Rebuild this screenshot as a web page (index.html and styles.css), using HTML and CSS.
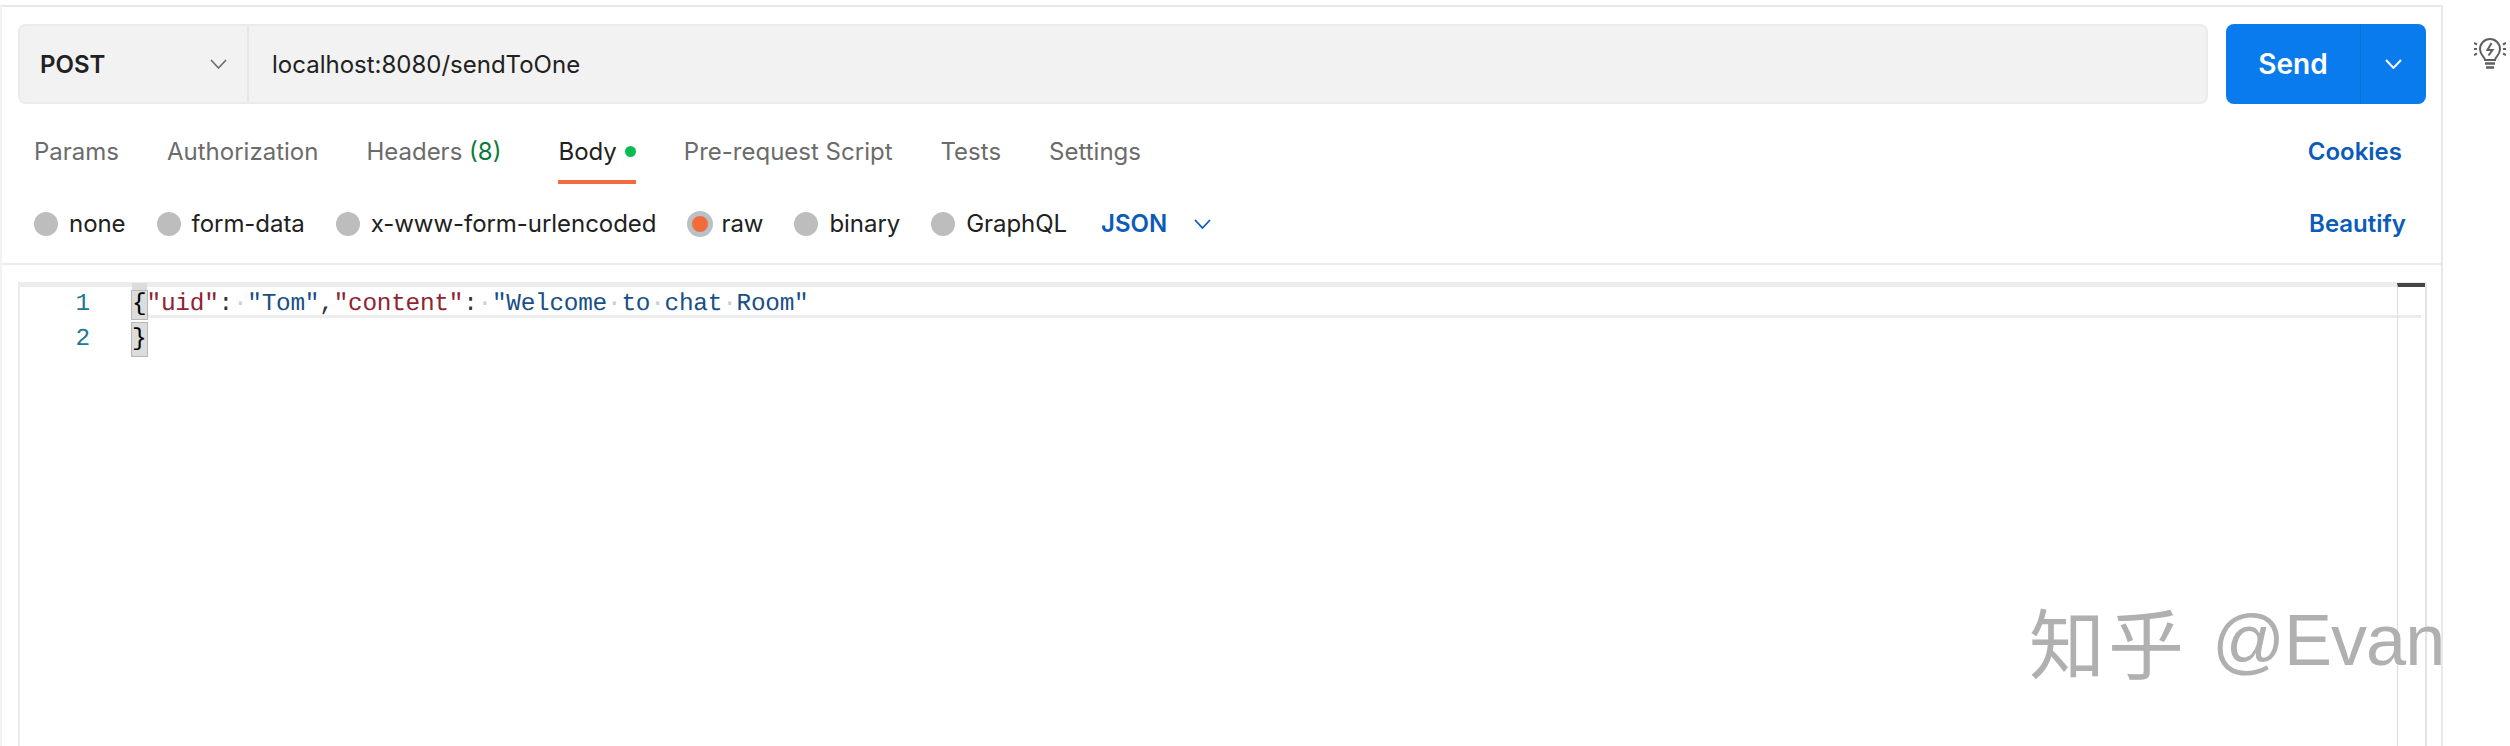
FILE: index.html
```html
<!DOCTYPE html>
<html lang="en">
<head>
<meta charset="utf-8">
<title>Postman request</title>
<link rel="stylesheet" href="styles.css">
</head>
<body>
<div class="app">
  <main class="workspace">
    <div class="request-row">
      <div class="url-bar">
        <div class="method"><span>POST</span>
          <svg class="chev" width="17" height="10" viewBox="0 0 17 10"><path d="M1 1l7.500 8L16 1" fill="none" stroke="#6b6b6b" stroke-width="1.600"/></svg>
        </div>
        <div class="url">localhost:8080/sendToOne</div>
      </div>
      <div class="send">
        <span class="send-label">Send</span>
        <span class="send-more"><svg width="17" height="10" viewBox="0 0 17 10"><path d="M1 1l7.500 8L16 1" fill="none" stroke="#fff" stroke-width="2"/></svg></span>
      </div>
    </div>
    <div class="tabs">
      <span class="tab">Params</span>
      <span class="tab">Authorization</span>
      <span class="tab tab-headers">Headers <em class="count">(8)</em></span>
      <span class="tab tab-active">Body<i class="dot"></i></span>
      <span class="tab">Pre-request Script</span>
      <span class="tab">Tests</span>
      <span class="tab">Settings</span>
      <span class="link tab-end">Cookies</span>
    </div>
    <div class="options">
      <label class="opt"><i class="radio"></i>none</label>
      <label class="opt"><i class="radio"></i>form-data</label>
      <label class="opt"><i class="radio"></i>x-www-form-urlencoded</label>
      <label class="opt opt-on"><i class="radio radio-on"></i>raw</label>
      <label class="opt"><i class="radio"></i>binary</label>
      <label class="opt"><i class="radio"></i>GraphQL</label>
      <span class="lang">JSON
        <svg width="17" height="10" viewBox="0 0 17 10"><path d="M1 1l7.500 8L16 1" fill="none" stroke="#0b5cb8" stroke-width="1.800"/></svg>
      </span>
      <span class="link beautify">Beautify</span>
    </div>
    <div class="editor">
      <div class="gutter"><div class="ln">1</div><div class="ln ln2">2</div></div>
      <div class="code">
        <div class="line line-active"><span class="brace">{</span><span class="key">"uid"</span><span class="pun">:</span><span class="ws">·</span><span class="str">"Tom"</span><span class="pun">,</span><span class="key">"content"</span><span class="pun">:</span><span class="ws">·</span><span class="str">"Welcome<span class="ws">·</span>to<span class="ws">·</span>chat<span class="ws">·</span>Room"</span></div>
        <div class="line line-two"><span class="brace">}</span></div>
      </div>
      <div class="ruler"></div>
    </div>
  </main>
  <aside class="side">
    <svg width="32" height="32" viewBox="0 0 32 32" fill="none" stroke="#5f5f5f" stroke-width="2">
      <path d="M11 22c0-3-5-4.500-5-11a10 10 0 0 1 20 0c0 6.500-5 8-5 11z"/>
      <path d="M17.500 5L13.500 12h5l-4 5.500" stroke-width="2"/>
      <path d="M11 25.500h10M12 29.500h8" stroke-width="2.500"/>
      <path d="M0 5l3 1.500M0 11h3M0 17l3-1.500M32 5l-3 1.500M32 11h-3M32 17l-3-1.500"/>
    </svg>
  </aside>
  <div class="watermark"><span class="wm-cn">知乎</span><span class="wm-at">@Evan</span></div>
</div>
</body>
</html>
```
FILE: styles.css
```css
* { box-sizing: border-box; }
html, body { margin: 0; height: 100%; background: #fff; overflow: hidden; }
.app {
  position: relative;
  display: flex;
  height: 746px;
  font-family: Inter, "Liberation Sans", sans-serif;
  font-size: 24px;
  color: #212121;
}
.workspace {
  width: 2443px;
  flex: none;
  margin-top: 5px;
  border-top: 2px solid #e8e8e8;
  border-left: 2px solid #f2f2f2;
  border-right: 2px solid #e8e8e8;
  display: flex;
  flex-direction: column;
}
.request-row {
  display: flex;
  gap: 18px;
  margin: 17px 15px 0 16px;
  height: 80px;
}
.url-bar {
  flex: 1;
  display: flex;
  background: #f2f2f2;
  border: 2px solid #ebebeb;
  border-radius: 8px;
}
.method {
  width: 229px;
  flex: none;
  display: flex;
  align-items: center;
  justify-content: space-between;
  padding: 0 20px 0 20px;
  font-weight: 600;
  border-right: 2px solid #e6e6e6;
}
.url { display: flex; align-items: center; padding-left: 23px; }
.send {
  width: 200px;
  flex: none;
  display: flex;
  background: #097bed;
  border-radius: 8px;
  color: #fff;
  font-weight: 600;
  font-size: 28px;
}
.send-label {
  width: 135px;
  display: flex;
  align-items: center;
  justify-content: center;
  border-right: 1px solid #0a6fd4;
}
.send-more { flex: 1; display: flex; align-items: center; justify-content: center; }
.tabs {
  display: flex;
  align-items: stretch;
  gap: 48px;
  height: 80px;
  padding: 0 39px 0 32px;
}
.tab {
  display: flex;
  align-items: center;
  color: #6b6b6b;
  border-bottom: 4px solid transparent;
  padding-top: 18px;
  white-space: pre;
}
.tab-headers { margin-right: 9px; }
.count { font-style: normal; color: #0c7a3d; }
.tab-active { color: #212121; border-bottom-color: #f26b3a; }
.dot { width: 11px; height: 11px; margin-left: 8px; border-radius: 50%; background: #0cbb52; }
.link { color: #0b5cb8; font-weight: 600; }
.tab-end { margin-left: auto; display: flex; align-items: center; padding-top: 14px; }
.options {
  display: flex;
  align-items: center;
  gap: 31px;
  height: 81px;
  padding: 0 35px 0 32px;
  border-bottom: 2px solid #ededed;
}
.opt { display: flex; align-items: center; gap: 11px; letter-spacing: -0.050px; }
.opt-on { gap: 8px; }
.radio {
  width: 24px;
  height: 24px;
  border-radius: 50%;
  background: #bdbdbd;
}
.radio-on { background: #f26b3a; border: 5px solid #b9c0c6; width: 26px; height: 26px; }
.lang {
  display: flex;
  align-items: center;
  gap: 27px;
  color: #0b5cb8;
  font-weight: 600;
  margin-left: 3px;
}
.beautify { margin-left: auto; }
.editor {
  position: relative;
  flex: 1;
  display: flex;
  margin: 17px 14px 0 16px;
  padding-top: 4px;
  border-top: 5px solid #ececec;
  border-left: 2px solid #ececec;
  border-right: 2px solid #e4e4e4;
  font-family: "Liberation Mono", monospace;
  font-size: 24.400px;
  letter-spacing: -0.250px;
  text-rendering: geometricPrecision;
}
.gutter {
  width: 112px;
  flex: none;
  padding-right: 42px;
  text-align: right;
  color: #237893;
}
.ln { height: 27px; line-height: 28px; }
.ln2 { height: 36px; line-height: 44px; }
.code { flex: 1; }
.line { white-space: pre; }
.line-active {
  height: 24px;
  line-height: 28px;
  margin-right: 4px;
  border-bottom: 3px solid #ececec;
  box-sizing: content-box;
}
.line-two { height: 36px; line-height: 44px; }
.brace {
  display: inline-block;
  width: 14.600px;
  text-align: center;
  background: #dcdcdc;
  color: #000;
  outline: 1px solid #b8b8b8;
}
.line-active .brace { box-shadow: 0 -8px 0 #dcdcdc; }
.line-two .brace { line-height: 33px; }
.key { color: #8f2330; }
.str { color: #1a4f85; }
.pun { color: #333; }
.ws { color: #c6d0d6; }
.ruler {
  position: absolute;
  top: -4px;
  right: 0;
  bottom: 0;
  width: 28px;
  border-left: 1px solid #dedede;
  border-top: 4px solid #444;
}
.side { flex: 1; padding: 38px 0 0 31px; }
.watermark {
  position: absolute;
  left: 2029px;
  top: 595px;
  display: flex;
  align-items: center;
  gap: 25px;
  color: #b0b0b0;
  white-space: nowrap;
}
.wm-cn { font: 400 76px/90px "Noto Sans CJK SC", sans-serif; letter-spacing: 3px; }
.wm-at { font: 72px/90px "Liberation Sans", sans-serif; letter-spacing: -1px; }
```
